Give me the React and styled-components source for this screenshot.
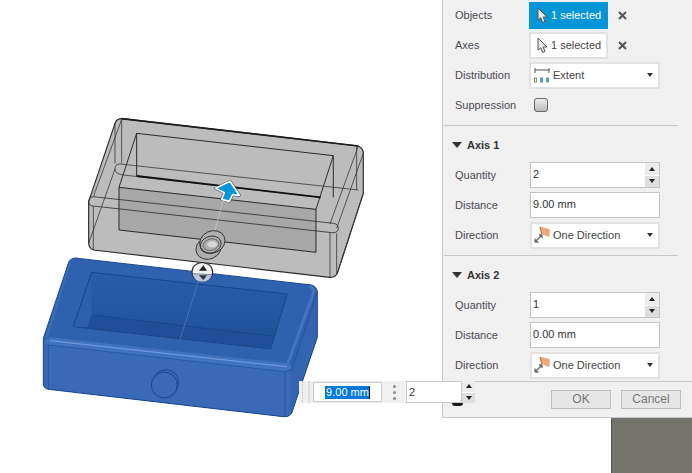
import React from 'react';
import styled, { createGlobalStyle } from 'styled-components';

const GlobalStyle = createGlobalStyle`
  html, body {
    margin: 0;
    padding: 0;
    background: #fff;
    font-family: "Liberation Sans", Arial, sans-serif;
  }
`;

const Page = styled.div`
  position: relative;
  width: 692px;
  height: 473px;
  overflow: hidden;
  display: flex;
  justify-content: flex-end;
`;

const Canvas = styled.svg`
  position: absolute;
  top: 0;
  left: 0;
`;

const Side = styled.div`
  position: relative;
  width: 250px;
  display: flex;
  flex-direction: column;
`;

const Panel = styled.div`
  height: 418px;
  box-sizing: border-box;
  background: #f0f0f0;
  border-left: 1px solid #c8c8c8;
  border-bottom: 1px solid #c8c8c8;
  display: flex;
  flex-direction: column;
  font-size: 11px;
  color: #444;
`;

const Corner = styled.div`
  flex: 1;
  margin-left: 169px;
  background: #73736b;
  border-left: 1px solid #55554f;
`;

const Section = styled.div`
  margin: 0 14px 0 1px;
  padding-bottom: 5px;
  border-bottom: 1px solid #c8c8c8;
`;

const LastSection = styled.div`
  flex: 1;
  margin-left: 1px;
`;

const SectionHeader = styled.div`
  height: 30px;
  padding: 4px 0 0 8px;
  display: flex;
  align-items: center;
  gap: 5px;
  font-weight: 700;
  color: #333;
`;

const Triangle = styled.span`
  width: 0;
  height: 0;
  border-left: 5px solid transparent;
  border-right: 5px solid transparent;
  border-top: 6px solid #333;
`;

const Row = styled.div`
  height: 30px;
  padding-left: 11px;
  display: flex;
  align-items: center;
`;

const Label = styled.div`
  width: 74px;
  color: #4a4a52;
`;

const SelectButton = styled.div`
  width: 79px;
  height: 27px;
  box-sizing: border-box;
  display: flex;
  align-items: center;
  gap: 2px;
  padding-left: 5px;
  border: 2px solid ${p => (p.$active ? '#0696d7' : '#e2e2e2')};
  background: ${p => (p.$active ? '#0696d7' : '#fff')};
  color: ${p => (p.$active ? '#fff' : '#444')};
`;

const Clear = styled.svg`
  margin-left: 10px;
`;

const Dropdown = styled.div`
  width: ${p => (p.$inset ? 130 : 131)}px;
  height: 27px;
  margin-left: ${p => (p.$inset ? '1px' : '0')};
  box-sizing: border-box;
  border: 2px solid #e2e2e2;
  background: #fff;
  display: flex;
  align-items: center;
  gap: 3px;
  padding: 0 5px 0 2px;
`;

const DropText = styled.span`
  flex: 1;
`;

const Caret = styled.span`
  width: 0;
  height: 0;
  border-left: 3px solid transparent;
  border-right: 3px solid transparent;
  border-top: 4px solid #333;
`;

const Check = styled.div`
  width: 14px;
  height: 14px;
  margin-left: 5px;
  box-sizing: border-box;
  border: 1px solid #666;
  border-radius: 3px;
  background: linear-gradient(#eee, #bbb);
`;

const Field = styled.div`
  width: 130px;
  height: 26px;
  margin-left: 1px;
  box-sizing: border-box;
  border: 1px solid #c4c4c4;
  background: #fff;
  display: flex;
  align-items: stretch;
  color: #333;
`;

const FieldText = styled.span`
  flex: 1;
  padding-left: 2px;
  line-height: 22px;
`;

const Spinner = styled.div`
  width: ${p => p.$width || 14}px;
  display: flex;
  flex-direction: column;
  gap: 1px;
  background: #fff;
`;

const SpinButton = styled.div`
  flex: 1;
  background: ${p => (p.$up ? '#ececec' : '#dedede')};
  display: flex;
  align-items: center;
  justify-content: center;
  &::after {
    content: '';
    border-left: 3px solid transparent;
    border-right: 3px solid transparent;
    ${p => (p.$up ? 'border-bottom: 4px solid #222;' : 'border-top: 4px solid #222;')}
  }
`;

const Footer = styled.div`
  height: 36px;
  box-sizing: border-box;
  border-top: 1px solid #c8c8c8;
  padding: 8px 11px 0 0;
  display: flex;
  justify-content: flex-end;
  gap: 10px;
`;

const FootButton = styled.div`
  width: 60px;
  height: 19px;
  box-sizing: border-box;
  border: 1px solid #bdbdbd;
  background: #e6e6e6;
  color: #777;
  font-size: 12px;
  text-align: center;
  line-height: 17px;
`;

const FloatBar = styled.div`
  position: absolute;
  left: 299px;
  top: 381px;
  width: 176px;
  height: 22px;
  background: #f0f0f0;
  display: flex;
  align-items: stretch;
  font-size: 11px;
  color: #333;
`;

const Grip = styled.div`
  width: 8px;
  margin-left: 3px;
  border-left: 1px dotted #bbb;
  border-right: 2px solid #ddd;
  box-sizing: border-box;
`;

const ValueBox = styled.div`
  width: 69px;
  margin: 1px 0 1px 3px;
  box-sizing: border-box;
  border: 1px solid #c8c8c8;
  background: #fff;
  display: flex;
  align-items: center;
  justify-content: center;
`;

const Selected = styled.span`
  background: #0078d7;
  color: #fff;
  line-height: 13px;
  padding-left: 1px;
  border-right: 1px solid #111;
`;

const Dots = styled.div`
  width: 24px;
  display: flex;
  flex-direction: column;
  align-items: center;
  justify-content: center;
  gap: 3px;
  & > i {
    width: 3px;
    height: 3px;
    border-radius: 50%;
    background: #888;
  }
`;

const CountBox = styled.div`
  flex: 1;
  box-sizing: border-box;
  border: 1px solid #c8c8c8;
  background: #fff;
  padding-left: 2px;
  line-height: 20px;
`;

const Blob = styled.span`
  position: absolute;
  left: 153px;
  top: 22px;
  width: 11px;
  height: 3px;
  background: #1a1a1a;
  border-radius: 0 0 6px 6px;
`;

const Cursor = () => (
  <svg width="13" height="17" viewBox="0 0 13 17">
    <path d="M2 1 L2 13 L4.8 10.8 L6.6 15.5 L9 14.5 L7.2 10 L11 10 Z" fill="#e8e8e8" stroke="#555" strokeWidth="1" />
  </svg>
);

const ClearIcon = () => (
  <Clear width="9" height="9" viewBox="0 0 9 9">
    <path d="M1 1 L8 8 M8 1 L1 8" stroke="#555" strokeWidth="2" />
  </Clear>
);

const ExtentIcon = () => (
  <svg width="17" height="16" viewBox="0 0 17 16">
    <path d="M2 1 V6 M16 1 V6 M2 3 H16" stroke="#555" strokeWidth="1" fill="none" />
    <rect x="1.5" y="11" width="2" height="4" fill="#fff" stroke="#666" strokeWidth="0.8" />
    <rect x="7" y="10.5" width="3" height="5" fill="#5b9bd0" />
    <rect x="13" y="10.5" width="3" height="5" fill="#5b9bd0" />
  </svg>
);

const DirectionIcon = () => (
  <svg width="16" height="18" viewBox="0 0 16 18">
    <path d="M6 1 L15.5 3.5 L15 10.5 L8 8 Z" fill="#eeaa7b" stroke="#d99a6c" strokeWidth="0.6" />
    <path d="M6 1 L8 8" stroke="#a87650" strokeWidth="1" />
    <path d="M1 16 L8 9 M1 16 V12.5 M1 16 H4.5 M8 9 H5 M8 9 V12" stroke="#666" strokeWidth="1.3" fill="none" />
  </svg>
);

const Spin = ({ width }) => (
  <Spinner $width={width}>
    <SpinButton $up />
    <SpinButton />
  </Spinner>
);

const AxisRows = ({ quantity, distance }) => (
  <>
    <Row>
      <Label>Quantity</Label>
      <Field>
        <FieldText>{quantity}</FieldText>
        <Spin />
      </Field>
    </Row>
    <Row>
      <Label>Distance</Label>
      <Field>
        <FieldText>{distance}</FieldText>
      </Field>
    </Row>
    <Row>
      <Label>Direction</Label>
      <Dropdown $inset>
        <DirectionIcon />
        <DropText>One Direction</DropText>
        <Caret />
      </Dropdown>
    </Row>
  </>
);

const GrayBox = () => (
  <g transform="translate(80 100) scale(0.3333)" fill="none" strokeLinejoin="round">
    <path d="M105,70 Q110,56 125,56 L835,138 Q850,145 850,160 L850,280 L772,520 Q765,533 750,532 L40,450 Q27,445 26,430 L26,305 Z" fill="#bcbcbc" stroke="#2a2a2a" strokeWidth="3.5" />
    <path d="M125,56 L835,138" stroke="#1c1c1c" strokeWidth="5" />
    <path d="M117,262 L708,328 L708,457 L117,390 Z" fill="#a8a8a8" />
    <g stroke="#2a2a2a" strokeWidth="3">
      <path d="M170,100 L760,167 L708,328 L117,262 Z" />
      <path d="M170,100 V228 M117,262 V390 L708,457 V328 M760,167 V292" />
      <path d="M835,270 L120,192 Q105,192 105,207 Q105,222 130,225 L722,292" strokeWidth="2.2" />
      <path d="M40,290 L760,370 Q775,372 775,385 Q775,400 755,398 L40,318 Q26,318 26,305 Q26,292 40,290" strokeWidth="2.4" />
      <path d="M125,58 L40,290 M105,70 V190 M125,58 V190 M835,138 L750,372 M850,160 L770,385 M830,140 V270 M750,398 V532 M770,400 V520 M40,318 V450 M26,430 L105,207 M772,520 L850,280" strokeWidth="2.2" />
    </g>
    <path d="M170,228 L722,292" stroke="#111" strokeWidth="5.5" />
    <path d="M430,300 L405,390" stroke="#d0d0d0" strokeWidth="1.8" />
    <g stroke="#2e2e2e" strokeWidth="2.6">
      <ellipse cx="386" cy="444" rx="39" ry="33" transform="rotate(-25 386 444)" fill="#adadad" />
      <ellipse cx="397" cy="426" rx="39" ry="33" transform="rotate(-25 397 426)" fill="#b0b0b0" />
      <ellipse cx="392" cy="434" rx="32" ry="25" transform="rotate(-20 392 434)" />
      <ellipse cx="393" cy="434" rx="24" ry="17" transform="rotate(-15 393 434)" strokeWidth="1.6" />
      <ellipse cx="397" cy="433" rx="15" ry="9" fill="#d6d6d6" stroke="none" />
    </g>
    <path d="M450,244 L478,286 L458,284 L448,304 L425,298 L433,278 L407,265 Z" fill="#0696d7" stroke="#335" strokeWidth="8" />
    <path d="M450,244 L478,286 L458,284 L448,304 L425,298 L433,278 L407,265 Z" fill="#0696d7" stroke="#fff" strokeWidth="5" />
  </g>
);

const BlueBox = () => (
  <g transform="translate(30 250) scale(0.3333)" fill="none" strokeLinejoin="round">
    <path d="M115,40 Q120,25 135,24 L845,105 Q860,110 862,125 L862,262 L785,490 Q775,503 760,500 L55,418 Q40,415 40,400 L40,265 Z" fill="#2f62ae" />
    <path d="M185,67 L772,132 L722,297 L130,230 Z" fill="url(#pocket)" stroke="#173f80" strokeWidth="2.4" />
    <path d="M185,67 V195 L172,232 L130,230 Z" fill="#2d60aa" />
    <path d="M172,232 L185,195 L728,258 L722,297 Z" fill="#1f4f98" />
    <path d="M185,195 L728,258 M185,67 L130,230" stroke="#173f80" strokeWidth="2" />
    <path d="M55,285 L765,365 L785,365 L785,490 Q775,503 760,500 L55,418 Q40,415 40,400 L40,275 Z" fill="#3a69b5" />
    <path d="M785,362 L862,140 V262 L785,490 Z" fill="#3464b0" />
    <path d="M60,262 L770,340 Q785,345 785,355 L765,365 L55,285 L42,272 Z" fill="#4072c0" />
    <path d="M60,272 L770,350" stroke="#6f97dc" strokeWidth="3.5" />
    <path d="M838,108 Q855,115 850,130 L772,345" stroke="#4473c0" strokeWidth="9" />
    <path d="M120,35 L50,262" stroke="#3c6cb8" strokeWidth="8" />
    <path d="M55,285 L765,365 V500 M55,285 V418 M765,365 L785,360 M785,360 L862,125" stroke="#1d4c96" strokeWidth="1.8" />
    <path d="M115,40 Q120,25 135,24 L845,105 Q860,110 862,125 L862,262 L785,490 Q775,503 760,500 L55,418 Q40,415 40,400 L40,265 Z" stroke="#1a4894" strokeWidth="3" />
    <path d="M505,95 L450,268" stroke="#6d90c8" strokeWidth="1.5" />
    <circle cx="408" cy="397" r="38" fill="#3a69b5" stroke="#173f80" strokeWidth="2.6" />
    <circle cx="403" cy="405" r="39" fill="#3a69b5" stroke="#173f80" strokeWidth="2.6" />
    <g transform="translate(517 66)">
      <ellipse rx="31" ry="29" fill="#f2f2f2" stroke="#333" strokeWidth="3.5" />
      <path d="M-29,5 L29,8 Q22,29 0,29 Q-24,29 -29,5 Z" fill="#b7c7df" />
      <path d="M-29,5 L29,8" stroke="#555" strokeWidth="2" />
      <path d="M3,-20 L14,-4 L-10,-4 Z" fill="#222" />
      <path d="M-10,10 L14,10 L3,24 Z" fill="#333" />
    </g>
  </g>
);

export default function App() {
  return (
    <Page>
      <GlobalStyle />
      <Canvas width="692" height="473" viewBox="0 0 692 473">
        <defs>
          <linearGradient id="pocket" x1="0" y1="0" x2="0" y2="1">
            <stop offset="0" stopColor="#2a5daa" />
            <stop offset="1" stopColor="#1f4f98" />
          </linearGradient>
        </defs>
        <BlueBox />
        <GrayBox />
      </Canvas>
      <Side>
        <Panel>
          <Section>
            <Row>
              <Label>Objects</Label>
              <SelectButton $active>
                <Cursor />
                1 selected
              </SelectButton>
              <ClearIcon />
            </Row>
            <Row>
              <Label>Axes</Label>
              <SelectButton>
                <Cursor />
                1 selected
              </SelectButton>
              <ClearIcon />
            </Row>
            <Row>
              <Label>Distribution</Label>
              <Dropdown>
                <ExtentIcon />
                <DropText>Extent</DropText>
                <Caret />
              </Dropdown>
            </Row>
            <Row>
              <Label>Suppression</Label>
              <Check />
            </Row>
          </Section>
          <Section>
            <SectionHeader>
              <Triangle />
              Axis 1
            </SectionHeader>
            <AxisRows quantity="2" distance="9.00 mm" />
          </Section>
          <LastSection>
            <SectionHeader>
              <Triangle />
              Axis 2
            </SectionHeader>
            <AxisRows quantity="1" distance="0.00 mm" />
          </LastSection>
          <Footer>
            <FootButton>OK</FootButton>
            <FootButton>Cancel</FootButton>
          </Footer>
        </Panel>
        <Corner />
      </Side>
      <FloatBar>
        <Grip />
        <ValueBox>
          <Selected>9.00 mm</Selected>
        </ValueBox>
        <Dots>
          <i />
          <i />
          <i />
        </Dots>
        <CountBox>2</CountBox>
        <Spin width={13} />
        <Blob />
      </FloatBar>
    </Page>
  );
}
